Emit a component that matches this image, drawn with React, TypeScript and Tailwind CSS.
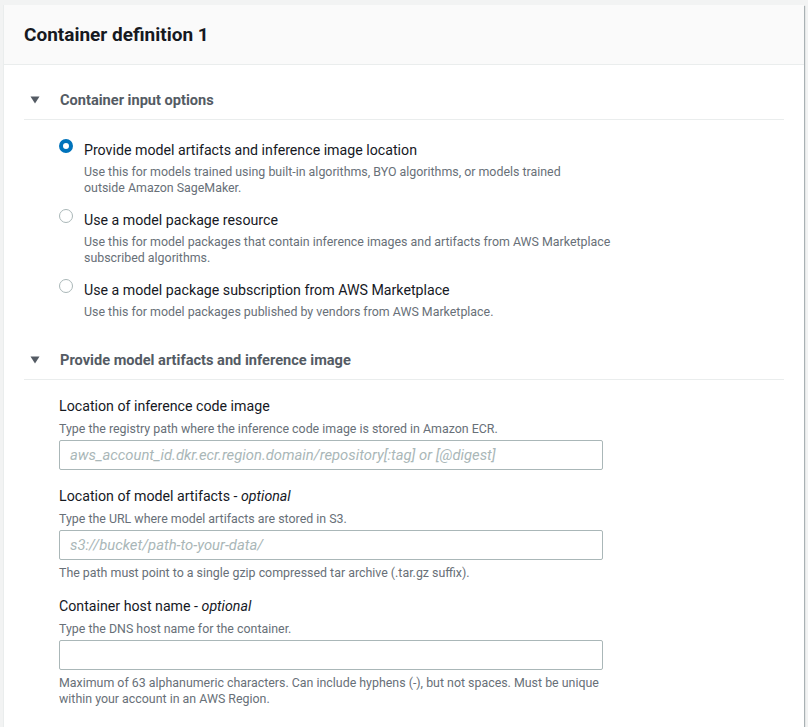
import React from 'react';

const font = { fontFamily: 'Roboto, "Liberation Sans", sans-serif' };

const Caret = () => (
  <svg width="10" height="8" viewBox="0 0 10 8" className="shrink-0">
    <path d="M0.5 0.5 L9.5 0.5 L5 7.5 Z" fill="#545b64" />
  </svg>
);

const SectionHeader = ({ title }: { title: string }) => (
  <div className="flex items-center h-[39px] border-b border-[#eaeded] pl-[6px] gap-[20px]">
    <Caret />
    <span className="text-[14.6px] font-bold text-[#545b64] leading-5">{title}</span>
  </div>
);

const RadioOption = ({
  checked,
  label,
  description,
}: {
  checked?: boolean;
  label: string;
  description: React.ReactNode;
}) => (
  <div className="flex gap-[11px]">
    <div className="shrink-0">
      <div
        className={
          checked
            ? 'w-[14px] h-[14px] mt-[-1px] rounded-full border-[4px] border-[#0073bb] bg-white'
            : 'w-[14px] h-[14px] mt-[-1px] rounded-full border border-[#aab7b8] bg-white'
        }
      />
    </div>
    <div className="flex flex-col">
      <span className="text-[14.2px] leading-5 text-[#16191f]">{label}</span>
      <span className="mt-[4px] text-[12.4px] leading-4 text-[#687078]">{description}</span>
    </div>
  </div>
);

const Field = ({
  label,
  optional,
  description,
  placeholder,
  constraint,
  className,
}: {
  label: string;
  optional?: boolean;
  description: string;
  placeholder?: string;
  constraint?: React.ReactNode;
  className?: string;
}) => (
  <div className={`flex flex-col ${className ?? ''}`}>
    <span className="text-[14.2px] leading-5 text-[#16191f]">
      {label}
      {optional && (
        <>
          {' - '}
          <i>optional</i>
        </>
      )}
    </span>
    <span className="mt-[5px] text-[12.4px] leading-4 text-[#687078]">{description}</span>
    <div className="mt-[3px] w-[544px] h-[30px] border border-[#aab7b8] rounded-[2px] flex items-center px-[10px]">
      {placeholder && (
        <span className="text-[14.8px] italic text-[#aab7b8] whitespace-nowrap">{placeholder}</span>
      )}
    </div>
    {constraint && (
      <span className="mt-[5px] text-[12.4px] leading-4 text-[#687078]">{constraint}</span>
    )}
  </div>
);

export default function App() {
  return (
    <div className="min-h-[727px] bg-[#f2f3f3] pt-[5px] pl-[3px] overflow-hidden" style={font}>
      <div className="w-[801px] bg-white border-l border-[#eaeded] shadow-[1px_1px_1px_0_rgba(0,28,36,0.3)] min-h-[740px]">
        <div className="h-[60px] bg-[#fafafa] border-b border-[#eaeded] flex items-center pl-5">
          <h2 className="text-[19px] font-bold text-[#16191f] leading-6">Container definition 1</h2>
        </div>

        <div className="px-5 pt-[16px]">
          <SectionHeader title="Container input options" />

          <div className="pl-[35px] pt-[20px] flex flex-col gap-[14px]">
            <RadioOption
              checked
              label="Provide model artifacts and inference image location"
              description={
                <>
                  Use this for models trained using built-in algorithms, BYO algorithms, or models trained
                  <br />
                  outside Amazon SageMaker.
                </>
              }
            />
            <RadioOption
              label="Use a model package resource"
              description={
                <>
                  Use this for model packages that contain inference images and artifacts from AWS Marketplace
                  <br />
                  subscribed algorithms.
                </>
              }
            />
            <RadioOption
              label="Use a model package subscription from AWS Marketplace"
              description="Use this for model packages published by vendors from AWS Marketplace."
            />
          </div>

          <div className="pt-[21px]">
            <SectionHeader title="Provide model artifacts and inference image" />
          </div>

          <div className="pl-[35px] pt-[16px] flex flex-col">
            <Field
              label="Location of inference code image"
              description="Type the registry path where the inference code image is stored in Amazon ECR."
              placeholder="aws_account_id.dkr.ecr.region.domain/repository[:tag] or [@digest]"
            />
            <Field
              className="mt-[16px]"
              label="Location of model artifacts"
              optional
              description="Type the URL where model artifacts are stored in S3."
              placeholder="s3://bucket/path-to-your-data/"
              constraint="The path must point to a single gzip compressed tar archive (.tar.gz suffix)."
            />
            <Field
              className="mt-[15px]"
              label="Container host name"
              optional
              description="Type the DNS host name for the container."
              constraint={
                <>
                  Maximum of 63 alphanumeric characters. Can include hyphens (-), but not spaces. Must be unique
                  <br />
                  within your account in an AWS Region.
                </>
              }
            />
          </div>
        </div>
      </div>
    </div>
  );
}
